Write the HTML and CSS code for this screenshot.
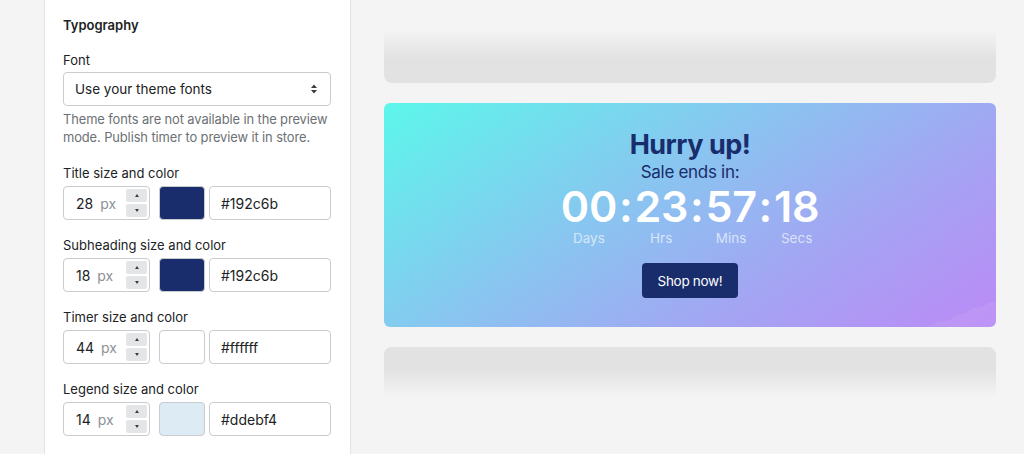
FILE: index.html
```html
<!DOCTYPE html>
<html lang="en">
<head>
<meta charset="utf-8">
<title>Timer settings</title>
<link rel="stylesheet" href="styles.css">
</head>
<body>
<div class="layout">
  <aside class="panel">
    <h2 class="panel-title">Typography</h2>

    <label class="field-label">Font</label>
    <div class="select">
      <span>Use your theme fonts</span>
      <svg class="select-arrow" width="8" height="12" viewBox="0 0 8 12"><path d="M4 1.5 L7 5 H1 Z M4 10.5 L7 7 H1 Z" fill="#3a3d40"/></svg>
    </div>
    <p class="help">Theme fonts are not available in the preview mode. Publish timer to preview it in store.</p>

    <div class="group">
      <label class="field-label">Title size and color</label>
      <div class="row">
        <div class="num"><span class="num-val">28</span><span class="num-unit">px</span>
          <div class="stepper"><span class="step"><i class="tri up"></i></span><span class="step"><i class="tri down"></i></span></div>
        </div>
        <div class="swatch" style="background:#192c6b"></div>
        <div class="text-input">#192c6b</div>
      </div>
    </div>

    <div class="group">
      <label class="field-label">Subheading size and color</label>
      <div class="row">
        <div class="num"><span class="num-val">18</span><span class="num-unit">px</span>
          <div class="stepper"><span class="step"><i class="tri up"></i></span><span class="step"><i class="tri down"></i></span></div>
        </div>
        <div class="swatch" style="background:#192c6b"></div>
        <div class="text-input">#192c6b</div>
      </div>
    </div>

    <div class="group">
      <label class="field-label">Timer size and color</label>
      <div class="row">
        <div class="num"><span class="num-val">44</span><span class="num-unit">px</span>
          <div class="stepper"><span class="step"><i class="tri up"></i></span><span class="step"><i class="tri down"></i></span></div>
        </div>
        <div class="swatch" style="background:#ffffff"></div>
        <div class="text-input">#ffffff</div>
      </div>
    </div>

    <div class="group">
      <label class="field-label">Legend size and color</label>
      <div class="row">
        <div class="num"><span class="num-val">14</span><span class="num-unit">px</span>
          <div class="stepper"><span class="step"><i class="tri up"></i></span><span class="step"><i class="tri down"></i></span></div>
        </div>
        <div class="swatch" style="background:#ddebf4"></div>
        <div class="text-input">#ddebf4</div>
      </div>
    </div>
  </aside>

  <main class="preview">
    <div class="skeleton skeleton-top"></div>
    <section class="timer-card">
      <h1 class="timer-title">Hurry up!</h1>
      <p class="timer-sub">Sale ends in:</p>
      <div class="timer">
        <div class="unit"><span class="digits">00</span><span class="legend">Days</span></div>
        <span class="colon">:</span>
        <div class="unit"><span class="digits">23</span><span class="legend">Hrs</span></div>
        <span class="colon">:</span>
        <div class="unit"><span class="digits">57</span><span class="legend">Mins</span></div>
        <span class="colon">:</span>
        <div class="unit"><span class="digits">18</span><span class="legend">Secs</span></div>
      </div>
      <button class="shop-btn">Shop now!</button>
      <svg class="corner-deco" width="70" height="26" viewBox="0 0 70 26"><path d="M0 26 L14 20 L22 20 L30 14 L40 12 L46 7 L56 6 L62 2 L70 0 L70 26 Z" fill="#ffffff" fill-opacity="0.07"/></svg>
    </section>
    <div class="skeleton skeleton-bottom"></div>
  </main>
</div>
</body>
</html>
```

FILE: styles.css
```css
* { box-sizing: border-box; }

html, body {
  margin: 0;
  padding: 0;
  height: 100%;
}

body {
  background: #f4f4f4;
  font-family: Inter, "Liberation Sans", sans-serif;
  color: #202223;
  overflow: hidden;
}

.layout {
  display: flex;
  height: 454px;
  padding-left: 44px;
}

.panel {
  width: 307px;
  flex: none;
  background: #ffffff;
  border-left: 1px solid #e1e3e5;
  border-right: 1px solid #e1e3e5;
  padding: 15px 19px 0 18px;
  display: flex;
  flex-direction: column;
}

.panel-title {
  margin: 0;
  font-size: 13px;
  font-weight: 600;
  line-height: 20px;
}

.field-label {
  display: block;
  font-size: 13px;
  line-height: 20px;
  margin-bottom: 3px;
  color: #202223;
}

.panel-title + .field-label {
  margin-top: 15px;
  margin-bottom: 2px;
}

.select {
  height: 34px;
  flex: none;
  border: 1px solid #c9cccf;
  border-radius: 4px;
  display: flex;
  align-items: center;
  justify-content: space-between;
  padding: 0 12px 0 11px;
  font-size: 13.5px;
}

.select-arrow { display: block; }

.help {
  margin: 5px 0 0;
  font-size: 12.9px;
  line-height: 18px;
  letter-spacing: -0.1px;
  color: #6d7175;
}

.group { margin-top: 15px; }
.help + .group { margin-top: 16px; }

.row {
  display: flex;
  align-items: stretch;
  height: 34px;
}

.num {
  width: 87px;
  border: 1px solid #c9cccf;
  border-radius: 4px;
  display: flex;
  align-items: center;
  padding: 0 2px 0 12px;
  font-size: 14px;
}

.num-val { color: #202223; }
.num-unit { color: #8c9196; margin-left: 7px; flex: 1; }

.stepper {
  width: 21px;
  display: flex;
  flex-direction: column;
  gap: 2px;
}

.step {
  height: 13px;
  background: #e4e5e7;
  border-radius: 2px;
  display: flex;
  align-items: center;
  justify-content: center;
}

.tri {
  width: 0;
  height: 0;
  border-left: 2.5px solid transparent;
  border-right: 2.5px solid transparent;
}
.tri.up { border-bottom: 3px solid #3a3d40; }
.tri.down { border-top: 3px solid #3a3d40; }

.swatch {
  width: 46px;
  margin-left: 9px;
  border: 1px solid #c9cccf;
  border-radius: 4px;
}

.text-input {
  flex: 1;
  margin-left: 4px;
  border: 1px solid #c9cccf;
  border-radius: 4px;
  display: flex;
  align-items: center;
  padding-left: 11px;
  font-size: 14px;
}

/* Preview */
.preview {
  flex: 1;
  padding: 30px 28px 0 33px;
  display: flex;
  flex-direction: column;
  gap: 20px;
}

.skeleton {
  height: 53px;
  flex: none;
}

.skeleton-top {
  border-radius: 0 0 8px 8px;
  background: linear-gradient(to bottom, rgba(226,226,226,0) 0%, #e2e2e2 55%, #e2e2e2 100%);
}

.skeleton-bottom {
  height: 50px;
  border-radius: 8px 8px 0 0;
  background: linear-gradient(to bottom, #e2e2e2 0%, #e2e2e2 45%, rgba(226,226,226,0) 100%);
}

.timer-card {
  position: relative;
  height: 224px;
  flex: none;
  border-radius: 6px;
  overflow: hidden;
  background: linear-gradient(146deg, #5cf7eb 0%, #88c6f0 40%, #a4a4f3 70%, #bb8af6 100%);
  display: flex;
  flex-direction: column;
  align-items: center;
  padding-top: 26px;
  text-align: center;
}

.timer-title {
  margin: 0;
  font-size: 27px;
  font-weight: 700;
  line-height: 32px;
  color: #192c6b;
  letter-spacing: -0.5px;
}

.timer-sub {
  margin: 0;
  font-size: 17px;
  line-height: 22px;
  letter-spacing: -0.3px;
  color: #192c6b;
}

.timer {
  display: flex;
  align-items: flex-start;
  margin-top: 3px;
}

.unit {
  display: flex;
  flex-direction: column;
  align-items: center;
}

.digits, .colon {
  font-size: 43px;
  font-weight: 600;
  line-height: 40px;
  color: #ffffff;
  letter-spacing: -0.3px;
}

.colon { padding: 0 2px; }

.legend {
  margin-top: 2px;
  font-size: 13.5px;
  line-height: 20px;
  color: rgba(232, 242, 250, 0.8);
}

.shop-btn {
  margin-top: 15px;
  height: 35px;
  padding: 0 16px;
  border: none;
  border-radius: 4px;
  background: #192c6b;
  color: #ffffff;
  font-family: Inter, "Liberation Sans", sans-serif;
  font-size: 13.5px;
  letter-spacing: -0.3px;
}

.corner-deco {
  position: absolute;
  right: 0;
  bottom: 0;
}
```
